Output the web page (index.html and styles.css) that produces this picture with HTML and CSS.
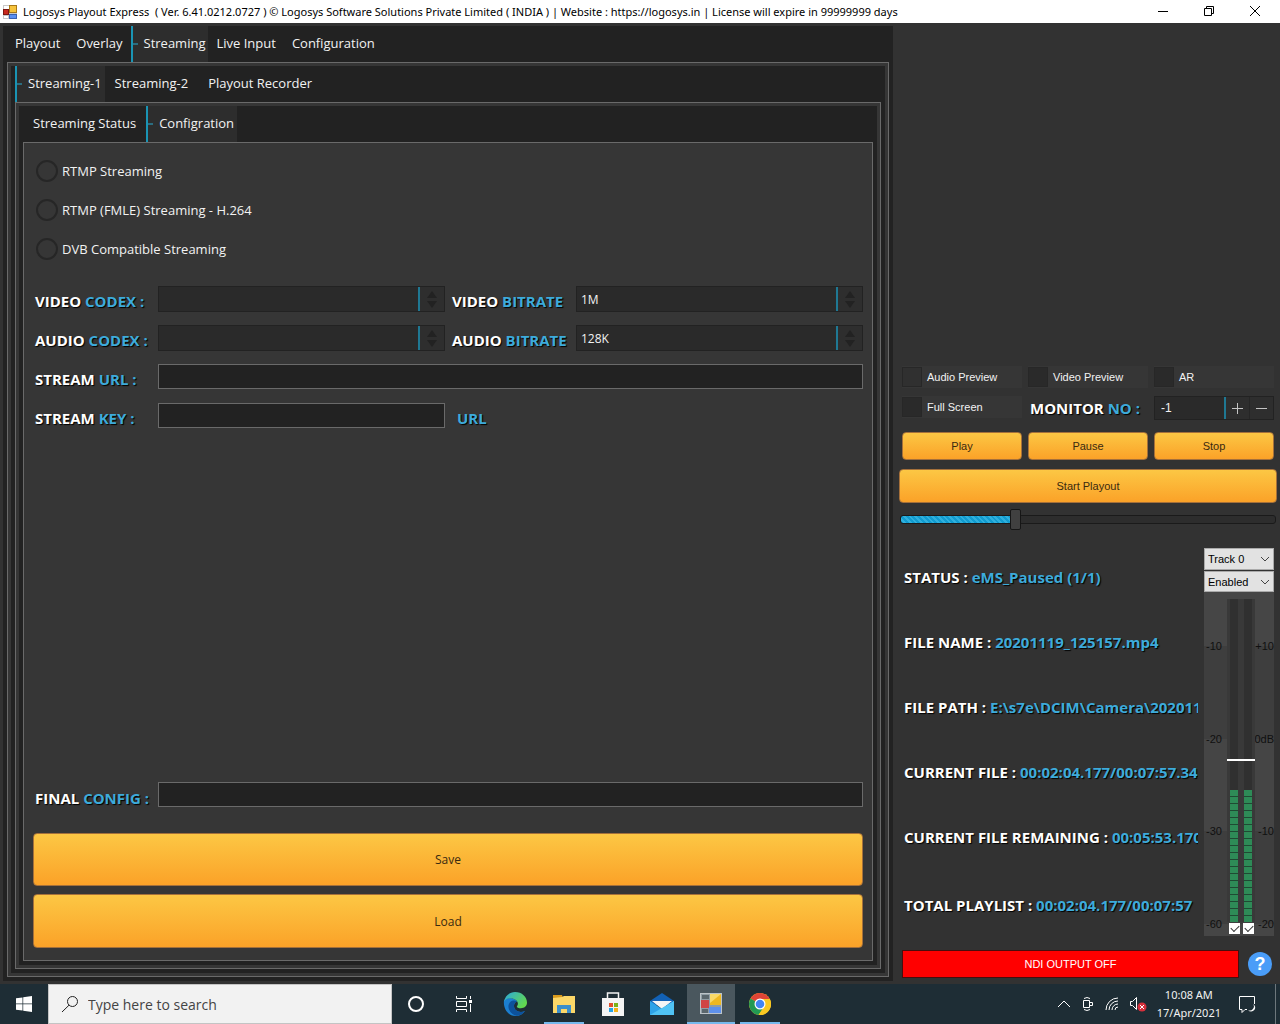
FILE: index.html
```html
<!DOCTYPE html>
<html lang="en">
<head>
  <meta charset="UTF-8" />
  <meta name="viewport" content="width=device-width, initial-scale=1" />
  <title>Logosys Playout Express</title>
  <link rel="stylesheet" href="styles.css">
</head>

<body>
  <header class="titlebar">
    <svg class="app-icon" width="14" height="14" viewBox="0 0 14 14">
      <rect width="14" height="14" fill="#c9c9c9" />
      <rect x="1" y="1" width="5" height="3" fill="#fff" />
      <rect x="0.5" y="4.5" width="5" height="5" fill="#c8281e" stroke="#7d1710" />
      <rect x="6.5" y="0.5" width="7" height="7" fill="#f6c33c" stroke="#a8791a" />
      <rect x="1" y="11" width="4" height="2" fill="#fff" />
      <rect x="6.5" y="9.5" width="7" height="4" fill="#5b8ff0" stroke="#3a61b0" />
    </svg>
    <h1>Logosys Playout Express&nbsp; ( Ver. 6.41.0212.0727 ) © Logosys Software Solutions Private Limited ( INDIA ) | Website : https://logosys.in | License will expire in 99999999 days</h1>
    <div class="window-buttons">
      <button aria-label="Minimize"><svg width="12" height="12" viewBox="0 0 12 12"><path d="M1 6.5h10" /></svg></button>
      <button aria-label="Restore"><svg width="12" height="12" viewBox="0 0 12 12"><path d="M1.500 3.500h7v7h-7zM3.500 3.500v-2h7v7h-2" /></svg></button>
      <button aria-label="Close"><svg width="12" height="12" viewBox="0 0 12 12"><path d="M1 1l10 10M11 1L1 11" /></svg></button>
    </div>
  </header>

  <main class="main">
    <section class="workspace">
      <!-- main tabs -->
      <div class="tabs">
        <nav class="tab-strip">
          <button class="tab">Playout</button>
          <button class="tab">Overlay</button>
          <button class="tab active">Streaming</button>
          <button class="tab">Live Input</button>
          <button class="tab">Configuration</button>
        </nav>
        <div class="tab-page">
          <!-- streaming tabs -->
          <div class="tabs">
            <nav class="tab-strip roomy">
              <button class="tab active">Streaming-1</button>
              <button class="tab">Streaming-2</button>
              <button class="tab">Playout Recorder</button>
            </nav>
            <div class="tab-page">
              <div class="tabs">
                <nav class="tab-strip roomy">
                  <button class="tab">Streaming Status</button>
                  <button class="tab active">Configration</button>
                </nav>
                <form class="tab-page config">
                  <label class="radio"><input type="radio" name="mode" />RTMP Streaming</label>
                  <label class="radio"><input type="radio" name="mode" />RTMP (FMLE) Streaming - H.264</label>
                  <label class="radio"><input type="radio" name="mode" />DVB Compatible Streaming</label>

                  <div class="fields">
                    <label class="caption" for="videoCodex">VIDEO <span>CODEX :</span></label>
                    <div class="combo">
                      <select id="videoCodex"><option></option></select>
                      <svg width="24" height="24" viewBox="0 0 24 24"><path d="M12 4l5 7H7zM7 14h10l-5 7z" /></svg>
                    </div>
                    <label class="caption second" for="videoBitrate">VIDEO <span>BITRATE</span></label>
                    <div class="combo">
                      <select id="videoBitrate"><option>1M</option></select>
                      <svg width="24" height="24" viewBox="0 0 24 24"><path d="M12 4l5 7H7zM7 14h10l-5 7z" /></svg>
                    </div>

                    <label class="caption" for="audioCodex">AUDIO <span>CODEX :</span></label>
                    <div class="combo">
                      <select id="audioCodex"><option></option></select>
                      <svg width="24" height="24" viewBox="0 0 24 24"><path d="M12 4l5 7H7zM7 14h10l-5 7z" /></svg>
                    </div>
                    <label class="caption second" for="audioBitrate">AUDIO <span>BITRATE</span></label>
                    <div class="combo">
                      <select id="audioBitrate"><option>128K</option></select>
                      <svg width="24" height="24" viewBox="0 0 24 24"><path d="M12 4l5 7H7zM7 14h10l-5 7z" /></svg>
                    </div>

                    <label class="caption" for="streamUrl">STREAM <span>URL :</span></label>
                    <input class="text wide" type="text" id="streamUrl" />

                    <label class="caption" for="streamKey">STREAM <span>KEY :</span></label>
                    <input class="text" type="text" id="streamKey" />
                    <div class="caption url"><span>URL</span></div>
                  </div>

                  <div class="fields final">
                    <label class="caption" for="finalConfig">FINAL <span>CONFIG :</span></label>
                    <input class="text wide" type="text" id="finalConfig" />
                  </div>
                  <button type="button" class="gold big">Save</button>
                  <button type="button" class="gold big">Load</button>
                </form>
              </div>
            </div>
          </div>
        </div>
      </div>
    </section>

    <aside class="player">
      <div class="preview"></div>

      <div class="options">
        <label class="check"><input type="checkbox" class="lit" />Audio Preview</label>
        <label class="check"><input type="checkbox" />Video Preview</label>
        <label class="check"><input type="checkbox" />AR</label>
        <label class="check"><input type="checkbox" />Full Screen</label>
        <label class="caption monitor" for="monitorNo">MONITOR <span>NO :</span></label>
        <div class="spinner">
          <input type="text" id="monitorNo" value="-1" />
          <button aria-label="Increase"><svg width="13" height="13" viewBox="0 0 13 13"><path d="M6.500 1v11M1 6.500h11" /></svg></button>
          <button aria-label="Decrease"><svg width="13" height="13" viewBox="0 0 13 13"><path d="M1 6.500h11" /></svg></button>
        </div>
      </div>

      <div class="transport">
        <button class="gold">Play</button>
        <button class="gold">Pause</button>
        <button class="gold">Stop</button>
      </div>
      <button class="gold start">Start Playout</button>
      <input class="seek" type="range" min="0" max="100" value="30" aria-label="Position" />

      <div class="details">
        <div class="info">
          <p class="caption">STATUS : <span>eMS_Paused (1/1)</span></p>
          <p class="caption">FILE NAME : <span>20201119_125157.mp4</span></p>
          <p class="caption">FILE PATH : <span>E:\s7e\DCIM\Camera\202011</span></p>
          <p class="caption">CURRENT FILE : <span>00:02:04.177/00:07:57.34</span></p>
          <p class="caption">CURRENT FILE REMAINING : <span>00:05:53.170</span></p>
          <p class="caption">TOTAL PLAYLIST : <span>00:02:04.177/00:07:57</span></p>
        </div>

        <div class="audio">
          <div class="dropdown">
            <select aria-label="Track"><option>Track 0</option></select>
            <svg width="10" height="6" viewBox="0 0 10 6"><path d="M1 1l4 4 4-4" /></svg>
          </div>
          <div class="dropdown">
            <select aria-label="Track state"><option>Enabled</option></select>
            <svg width="10" height="6" viewBox="0 0 10 6"><path d="M1 1l4 4 4-4" /></svg>
          </div>
          <div class="meter">
            <div class="scale"><span>-10</span><span>-20</span><span>-30</span><span>-60</span></div>
            <div class="channels">
              <div class="bars">
                <div class="bar"><div class="level"></div></div>
                <div class="bar"><div class="level"></div></div>
                <div class="gain"></div>
              </div>
              <div class="mutes">
                <input type="checkbox" checked aria-label="Left channel" />
                <input type="checkbox" checked aria-label="Right channel" />
              </div>
            </div>
            <div class="scale right"><span>+10</span><span>0dB</span><span>-10</span><span>-20</span></div>
          </div>
        </div>
      </div>

      <div class="output">
        <button class="ndi">NDI OUTPUT OFF</button>
        <button class="help">?</button>
      </div>
    </aside>
  </main>

  <footer class="taskbar">
    <button class="start-menu" aria-label="Start">
      <svg width="16" height="16" viewBox="0 0 16 16"><path fill="#fff" d="M0 2.300L6.500 1.400v6.200H0zM7.200 1.300L16 0v7.600H7.200zM0 8.300h6.500v6.300L0 13.700zM7.200 8.300H16V16l-8.800-1.300z" /></svg>
    </button>
    <label class="search">
      <svg width="18" height="18" viewBox="0 0 18 18"><circle cx="11.500" cy="6.500" r="5" /><path d="M8 10.200L1 17" /></svg>
      <input type="text" placeholder="Type here to search" aria-label="Search" />
    </label>
    <nav class="tasks">
      <button class="task" aria-label="Cortana">
        <svg width="18" height="18" viewBox="0 0 18 18"><circle cx="9" cy="9" r="7" fill="none" stroke="#fff" stroke-width="2" /></svg>
      </button>
      <button class="task" aria-label="Task view">
        <svg width="18" height="18" viewBox="0 0 18 18"><path fill="none" stroke="#fff" d="M1.500 1v2.500h10V1M1.500 6.500h10v5h-10zM1.500 17v-2.500h10V17M15.500 1v3M15.500 9v8" /><path fill="#fff" d="M14 5h3v3h-3z" /></svg>
      </button>
    </nav>
    <nav class="tasks pinned">
      <button class="task" aria-label="Edge">
        <svg width="24" height="24" viewBox="0 0 24 24">
          <defs>
            <linearGradient id="edgeTop" x1="0" y1="0" x2="1" y2="0.600"><stop offset="0" stop-color="#2aa8e0" /><stop offset="1" stop-color="#62d84e" /></linearGradient>
          </defs>
          <path fill="#1b7fd1" d="M1 8.500C0 16 4.500 24 12.500 24c4 0 7.500-2 9.500-5-5 2.500-11 0-11-5 0-2.500 1.500-4 3-4.500C12 6 4 4.500 1 8.500z" />
          <path fill="#0d529c" d="M10 8.500c-4 1-5.500 5-4 9 1.500 3.500 4.500 6 8 6.300 3.500-.3 6.300-2.300 8-4.800-5 2.500-11 0-11-5 0-2.500 1.500-4 3-4.500-1-.8-2.500-1.200-4-1z" />
          <path fill="url(#edgeTop)" d="M1 9.500C2 4 6.500 0 12 0c7 0 12 5 12 10.500 0 4-3 5.700-6 5.700-3 0-4.700-1-4-2 2-2.500.5-5.500-2-6.700C8 5.500 3.500 6 1 9.500z" />
        </svg>
      </button>
      <button class="task open" aria-label="File Explorer">
        <svg width="22" height="20" viewBox="0 0 22 20"><path fill="#d99a1c" d="M0 1h9l1 3H0z" /><path fill="#fbd768" d="M0 4l9-1 2-1h11v17H0z" /><path fill="#3b8fcb" d="M4 11h14v8h-4v-4H8v4H4z" /></svg>
      </button>
      <button class="task" aria-label="Store">
        <svg width="24" height="24" viewBox="0 0 24 24"><path fill="none" stroke="#f4f4f4" stroke-width="1.500" d="M6.500 7V1h11v6" /><path fill="#f4f4f4" d="M1 6h22v18H1z" /><path fill="#e2502b" d="M8 11h4v4H8z" /><path fill="#7bb318" d="M13 11h4v4h-4z" /><path fill="#23a4e6" d="M8 16h4v4H8z" /><path fill="#f5b217" d="M13 16h4v4h-4z" /></svg>
      </button>
      <button class="task" aria-label="Mail">
        <svg width="24" height="22" viewBox="0 0 24 22"><path fill="#1261b5" d="M12 0l12 8v4H0V8z" /><path fill="#f5f5f5" d="M2 8h20l-10 8z" /><path fill="#2ea3e8" d="M0 8l12 8 12-8v14H0z" /><path fill="#50c3f4" d="M0 22L12 15 24 8v14z" /></svg>
      </button>
      <button class="task open current" aria-label="Logosys Playout Express">
        <svg width="22" height="22" viewBox="0 0 22 22"><rect x="0.500" y="0.500" width="21" height="20" fill="#909da4" stroke="#bcc3c7" /><path fill="#5b676d" d="M2 2h7v4H2zM2 16h6v4H2z" /><rect x="1" y="7" width="8" height="8" fill="#d04545" /><rect x="10" y="1" width="11" height="11" fill="#efb821" /><path fill="#f9d968" d="M10 1h11L10 10z" /><rect x="9" y="14" width="12" height="6" fill="#5e91eb" /></svg>
      </button>
      <button class="task open" aria-label="Chrome">
        <svg width="22" height="22" viewBox="0 0 22 22"><circle cx="11" cy="11" r="11" fill="#f9c822" /><path fill="#df4436" d="M11 11L1.500 5.500a11 11 0 0 1 19 0z" /><path fill="#229954" d="M1.500 5.500a11 11 0 0 0 8 16.400L15 14l-4-3z" /><path fill="#f9c822" d="M11 6h9.800a11 11 0 0 1-11.300 15.900L15 14z" /><circle cx="11" cy="11" r="5.500" fill="#fff" /><circle cx="11" cy="11" r="4.300" fill="#4285f4" /></svg>
      </button>
    </nav>

    <div class="tray">
      <svg width="14" height="14" viewBox="0 0 14 14"><path d="M1 10l6-6 6 6" /></svg>
      <svg width="14" height="16" viewBox="0 0 14 16"><path d="M2.500 4.500h6v7h-6zM8.500 6.500h3v3h-3M3 2.500q3-2 6 0M3 13.500q3 2 6 0" /></svg>
      <svg width="14" height="14" viewBox="0 0 14 14"><path d="M1 13A12 12 0 0 1 13 1M4 13a9 9 0 0 1 9-9M7 13a6 6 0 0 1 6-6M10 13a3 3 0 0 1 3-3" /></svg>
      <svg width="18" height="16" viewBox="0 0 18 16"><path d="M1.500 5.500h2l4-4v12l-4-4h-2z" /><circle cx="13" cy="11" r="4.500" fill="#d6303c" stroke="none" /><path d="M11 9l4 4M15 9l-4 4" /></svg>
      <div class="clock">10:08 AM<br>17/Apr/2021</div>
      <svg width="18" height="18" viewBox="0 0 18 18"><path d="M9 14.500H7l-3 3v-3H1.500v-13h15V9" /><path fill="#fff" stroke="none" d="M15 9a4 4 0 1 1-5 6 4 4 0 0 0 5-6z" /></svg>
    </div>
  </footer>
</body>
</html>
```
FILE: styles.css
```css
* {
  box-sizing: border-box;
}
body {
  margin: 0;
  min-height: 100vh;
  display: flex;
  flex-direction: column;
  background: #323232;
  color: #f2f2f2;
  font-family: "Open Sans", "Noto Sans", sans-serif;
  font-size: 13px;
}
button, input, select {
  font: inherit;
  color: inherit;
  margin: 0;
}
button {
  border: 0;
  padding: 0;
  background: none;
}

/* title bar */
.titlebar {
  display: flex;
  align-items: center;
  height: 23px;
  background: #fff;
  color: #000;
  padding: 0 2px 0 3px;
}
.titlebar h1 {
  flex: 1;
  margin: 0 0 0 6px;
  font-family: "Noto Sans", sans-serif;
  font-size: 11px;
  font-weight: 400;
  line-height: 22px;
  white-space: nowrap;
  overflow: hidden;
}
.window-buttons {
  display: flex;
}
.window-buttons button {
  width: 46px;
  height: 23px;
}
.window-buttons svg {
  fill: none;
  stroke: #000;
}

.main {
  flex: 1;
  display: flex;
}
.workspace {
  flex: 1;
  display: flex;
  padding: 3px 0 3px 3px;
  min-width: 0;
}

/* tabs */
.tabs {
  flex: 1;
  display: flex;
  flex-direction: column;
  background: #222;
  padding: 0 4px 4px;
}
.tab-strip {
  display: flex;
  height: 36px;
}
.tab {
  position: relative;
  padding: 0 8px 2px;
  white-space: nowrap;
}
.roomy .tab {
  padding: 0 10px 2px;
}
.tab-strip .tab.active {
  padding: 0 3px 2px 11px;
  background: #2d2d2d;
  border-left: 2px solid #1a94b4;
}
.tab.active::before {
  content: "";
  position: absolute;
  left: 0;
  top: 17px;
  width: 5px;
  height: 2px;
  background: #2b6d80;
}
.tab-page {
  flex: 1;
  display: flex;
  flex-direction: column;
  background: #363636;
  border: 1px solid #6a6a6a;
  padding: 3px;
}

/* streaming configuration */
.config {
  padding: 8px 9px 12px;
}
.radio {
  display: flex;
  align-items: center;
  height: 39px;
  padding-left: 3px;
}
.radio input {
  appearance: none;
  width: 22px;
  height: 22px;
  margin-right: 4px;
  border: 2px solid #262626;
  border-radius: 50%;
}
.radio input:checked {
  background: #1a94b4;
}
.fields {
  display: grid;
  grid-template-columns: 125px 1fr 131px 1fr;
  grid-auto-rows: 39px;
  align-items: start;
  margin-top: 18px;
}
.fields.final {
  margin-top: auto;
  margin-bottom: 12px;
}
.caption {
  margin: 0;
  padding-left: 2px;
  font-family: "Open Sans", "Noto Sans", sans-serif;
  font-size: 15px;
  font-weight: 700;
  line-height: 30px;
  color: #fff;
  text-shadow: 1px 1px 1px #000;
  white-space: nowrap;
}
.caption span {
  color: #3dabdb;
}
.caption.second {
  padding-left: 7px;
}
.caption.url {
  padding-left: 12px;
}
.final .caption {
  line-height: 32px;
}
.combo {
  display: flex;
  height: 26px;
  background: #2a2a2a;
  border: 1px solid #222;
}
.combo select {
  appearance: none;
  flex: 1;
  min-width: 0;
  padding: 0 4px;
  background: none;
  border: 0;
  border-right: 2px solid #1f7893;
  font-size: 12px;
}
.combo svg {
  background: #2e2e2e;
  fill: #222;
}
.text {
  width: 100%;
  height: 25px;
  padding: 0 4px;
  background: #222;
  border: 1px solid #6a6a6a;
}
.text.wide {
  grid-column: 2 / -1;
}

/* orange buttons */
.gold {
  height: 28px;
  border: 1px solid #a5703a;
  border-radius: 4px;
  background: linear-gradient(#fcc744, #fba228);
  color: #3a2a10;
  font-family: "Liberation Sans", Arial, sans-serif;
  font-size: 11px;
}
.gold.big {
  height: 53px;
  font-family: "Open Sans", "Noto Sans", sans-serif;
  font-size: 12px;
}
.gold.big + .big {
  height: 54px;
  margin-top: 8px;
}

/* player side */
.player {
  width: 387px;
  display: flex;
  flex-direction: column;
  font-family: "Liberation Sans", Arial, sans-serif;
  font-size: 11px;
}
.preview {
  flex: 1;
}
.options, .transport {
  display: grid;
  grid-template-columns: repeat(3, minmax(0, 1fr));
  gap: 6px;
  padding: 0 6px 0 9px;
}
.options {
  grid-auto-rows: 24px;
}
.check {
  display: flex;
  align-items: center;
  height: 22px;
  background: #363636;
  white-space: nowrap;
}
.check input {
  appearance: none;
  width: 20px;
  height: 20px;
  margin-right: 5px;
  background: #2a2a2a;
  border: 1px solid #272727;
}
.check input.lit {
  background: #303030;
}
.check input:checked {
  background: #1a94b4;
}
.monitor {
  line-height: 24px;
}
.spinner {
  display: flex;
  height: 24px;
  background: #2a2a2a;
  border: 1px solid #222;
}
.spinner input {
  flex: 1;
  min-width: 0;
  padding: 0 6px;
  background: none;
  border: 0;
  border-right: 2px solid #1f7893;
  font-size: 12px;
}
.spinner button {
  display: flex;
  align-items: center;
  justify-content: center;
  width: 23px;
  background: #2e2e2e;
}
.spinner button + button {
  width: 24px;
  border-left: 1px solid #262626;
}
.spinner svg {
  fill: none;
  stroke: #c4c4c4;
}
.transport {
  margin-top: 12px;
}
.gold.start {
  height: 34px;
  margin: 9px 3px 0 6px;
}
.seek {
  appearance: none;
  height: 21px;
  margin: 6px 4px 0 7px;
  background: none;
}
.seek::-webkit-slider-runnable-track {
  height: 9px;
  border: 1px solid #1a1a1a;
  border-radius: 3px;
  background:
    linear-gradient(90deg, transparent 30%, #2d2d2d 30%),
    repeating-linear-gradient(45deg, #119cd0 0 2px, #2fb0dd 2px 4px);
}
.seek::-webkit-slider-thumb {
  appearance: none;
  width: 11px;
  height: 21px;
  margin-top: -7px;
  background: #404040;
  border: 1px solid #161616;
  border-radius: 2px;
}

/* file info and audio meter */
.details {
  display: flex;
  gap: 6px;
  margin-top: 18px;
  padding: 0 6px 0 9px;
}
.info {
  flex: 1;
  min-width: 0;
}
.info .caption {
  line-height: 65px;
  margin-top: -3px;
  margin-bottom: 3px;
  overflow: hidden;
}
.info .caption:last-child {
  margin: 0;
}
.audio {
  width: 70px;
}
.dropdown {
  position: relative;
  height: 22px;
  margin-bottom: 1px;
}
.dropdown + .dropdown {
  margin-bottom: 0;
  height: 21px;
}
.dropdown select {
  appearance: none;
  display: block;
  width: 100%;
  height: 100%;
  padding: 0 3px;
  background: #e2e2e2;
  border: 1px solid #aaa;
  border-radius: 0;
  color: #000;
}
.dropdown svg {
  position: absolute;
  right: 4px;
  top: 8px;
  fill: none;
  stroke: #444;
  pointer-events: none;
}
.meter {
  display: grid;
  grid-template-columns: 23px 28px 19px;
  height: 344px;
  background: linear-gradient(#464646 54px, #3e3e3e 54px 147px, #454545 147px 239px, #3e3e3e 239px 332px, #464646 332px);
  color: #101010;
}
.scale {
  display: flex;
  flex-direction: column;
  justify-content: space-between;
  padding: 48px 0 5px 2px;
  line-height: 13px;
}
.scale.right {
  align-items: flex-end;
  padding-left: 0;
}
.channels {
  display: flex;
  flex-direction: column;
  padding: 7px 0 2px;
}
.bars {
  position: relative;
  flex: 1;
  display: flex;
  justify-content: center;
  gap: 6px;
  background: #393939;
}
.bar {
  display: flex;
  align-items: flex-end;
  width: 8px;
  background: #303030;
}
.level {
  width: 100%;
  height: 41%;
  background: repeating-linear-gradient(#2e8b57 0 6px, #1f4a33 6px 7px);
}
.gain {
  position: absolute;
  left: 0;
  right: 0;
  bottom: 50%;
  height: 2px;
  background: #fff;
}
.mutes {
  display: flex;
  justify-content: center;
  gap: 3px;
  padding-top: 1px;
}
.mutes input {
  appearance: none;
  width: 11px;
  height: 11px;
  background: #fff;
}
.mutes input:checked::before {
  content: "";
  display: block;
  width: 7px;
  height: 4px;
  margin: 2px;
  border: solid #333;
  border-width: 0 0 1px 1px;
  transform: rotate(-45deg);
}
.output {
  display: flex;
  align-items: center;
  gap: 9px;
  margin: 12px 8px 6px 9px;
}
.ndi {
  flex: 1;
  height: 28px;
  background: #f00;
  border: 1px solid #4a0d0d;
  color: #fff;
}
.help {
  width: 24px;
  height: 24px;
  border-radius: 50%;
  background: #4a9df8;
  color: #fff;
  font-size: 18px;
  font-weight: 700;
}

/* windows taskbar */
.taskbar {
  display: flex;
  height: 40px;
  background: #1e2d35;
}
.start-menu {
  display: flex;
  align-items: center;
  justify-content: center;
  width: 48px;
}
.search {
  display: flex;
  align-items: center;
  width: 344px;
  padding-left: 12px;
  background: #f2f2f2;
  border: 1px solid #c4c4c4;
  color: #333;
}
.search svg {
  fill: none;
  stroke: #222;
}
.search input {
  flex: 1;
  min-width: 0;
  margin-left: 9px;
  padding: 0;
  border: 0;
  background: none;
  font-size: 14px;
}
.search input::placeholder {
  color: #444;
}
.tasks {
  display: flex;
}
.tasks.pinned {
  gap: 1px;
  margin-left: 3px;
}
.task {
  display: flex;
  align-items: center;
  justify-content: center;
  width: 48px;
  padding-top: 2px;
  border-bottom: 2px solid transparent;
}
.task.open {
  background: linear-gradient(#76b9ed, #76b9ed) center bottom / 40px 2px no-repeat border-box;
}
.task.current {
  background: #4a575e;
  border-color: #76b9ed;
}
.tray {
  display: flex;
  align-items: center;
  gap: 10px;
  margin-left: auto;
  margin-right: 4px;
  padding-right: 19px;
  border-right: 1px solid #6d777c;
}
.tray svg {
  fill: none;
  stroke: #fff;
}
.clock {
  font-family: "Noto Sans", sans-serif;
  font-size: 11px;
  line-height: 18px;
  text-align: center;
}
.clock + svg {
  margin-left: 7px;
}
```
